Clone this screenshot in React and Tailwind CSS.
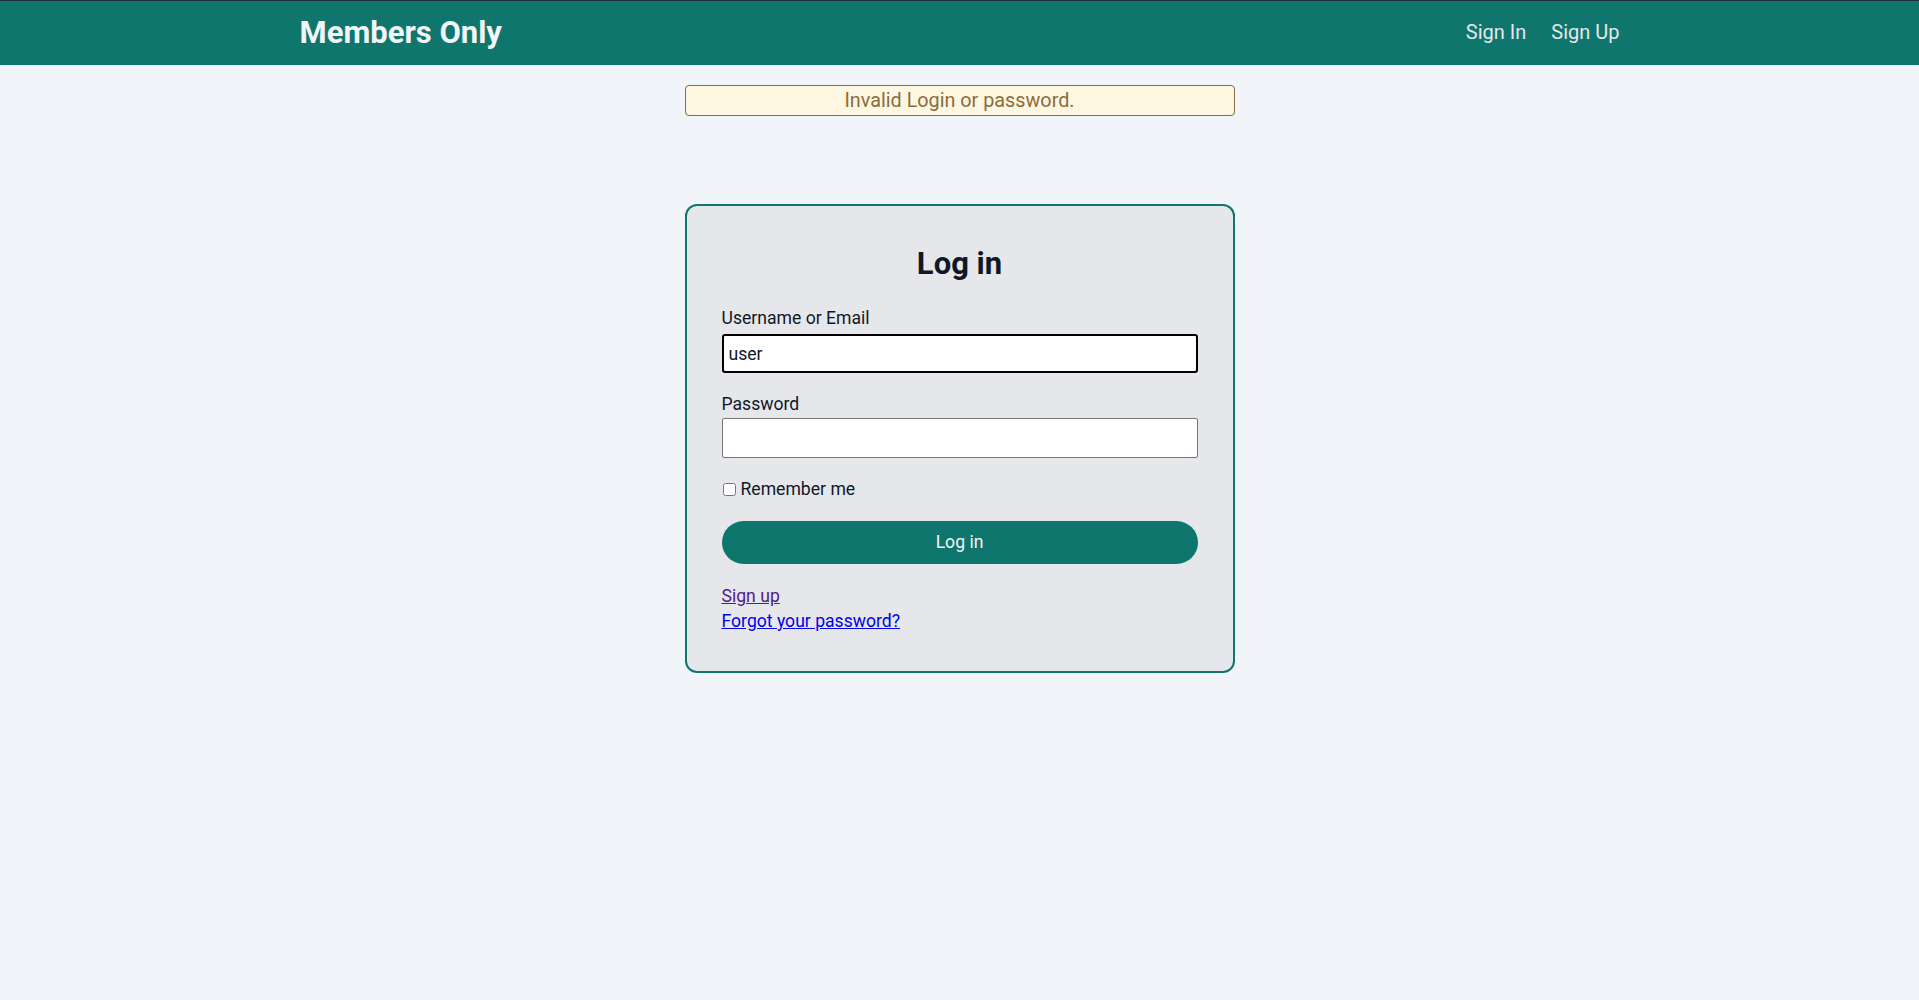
import { useState } from "react";

function Header() {
  return (
    <header className="bg-[#0f766e] border-t border-gray-800 h-[65px]">
      <div className="max-w-[1320px] mx-auto h-full flex items-center justify-between">
        <a href="#" className="text-[31px] font-bold text-gray-100">
          Members Only
        </a>
        <nav className="flex items-center gap-[25px] text-xl text-gray-200 pb-[2px]">
          <a href="#">Sign In</a>
          <a href="#">Sign Up</a>
        </nav>
      </div>
    </header>
  );
}

function App() {
  let [login, setLogin] = useState("user");
  let [password, setPassword] = useState("");

  return (
    <div
      className="min-h-screen bg-slate-100 text-gray-900"
      style={{ fontFamily: "Roboto, 'Liberation Sans', sans-serif" }}
    >
      <Header />
      <main className="flex flex-col items-center">
        <div className="mt-[20px] w-[550px] h-[31px] flex items-center justify-center rounded border border-[#8a6d3b] bg-[#fdf7e1] text-[19.8px] text-[#8a6d3b]">
          Invalid Login or password.
        </div>

        <div className="mt-[88px] w-[550px] rounded-xl border-2 border-[#0f766e] bg-gray-200 px-[35px] pt-[40px] pb-[37px]">
          <h2 className="text-[31px] leading-9 font-bold text-center text-gray-900 mb-6">Log in</h2>
          <form>
            <label className="block text-[17.6px] leading-6 mb-1" htmlFor="login">
              Username or Email
            </label>
            <input
              id="login"
              type="text"
              value={login}
              onChange={(e) => setLogin(e.target.value)}
              className="block w-full h-[39px] px-[5px] text-[17.6px] bg-white border-2 border-black rounded-[3px] outline-none"
            />

            <label className="block text-[17.6px] leading-6 mt-[19px] mb-[2px]" htmlFor="password">
              Password
            </label>
            <input
              id="password"
              type="password"
              value={password}
              onChange={(e) => setPassword(e.target.value)}
              className="block w-full h-[40px] px-[5px] text-[17.6px] bg-white border border-[#767676] rounded-[2px] outline-none"
            />

            <label className="mt-[19px] flex items-center text-[17.6px] leading-6">
              <input type="checkbox" className="w-[13px] h-[13px] ml-[1px] mr-[5px]" />
              Remember me
            </label>

            <button
              type="button"
              className="mt-5 w-full h-[43px] rounded-full bg-[#0f766e] text-gray-100 text-[17.6px]"
            >
              Log in
            </button>
          </form>

          <div className="mt-5 text-[17.6px] leading-[25px]">
            <a href="#" className="block w-fit underline text-[#551a8b]">
              Sign up
            </a>
            <a href="#" className="block w-fit underline text-[#0000ee]">
              Forgot your password?
            </a>
          </div>
        </div>
      </main>
    </div>
  );
}

export default App;
